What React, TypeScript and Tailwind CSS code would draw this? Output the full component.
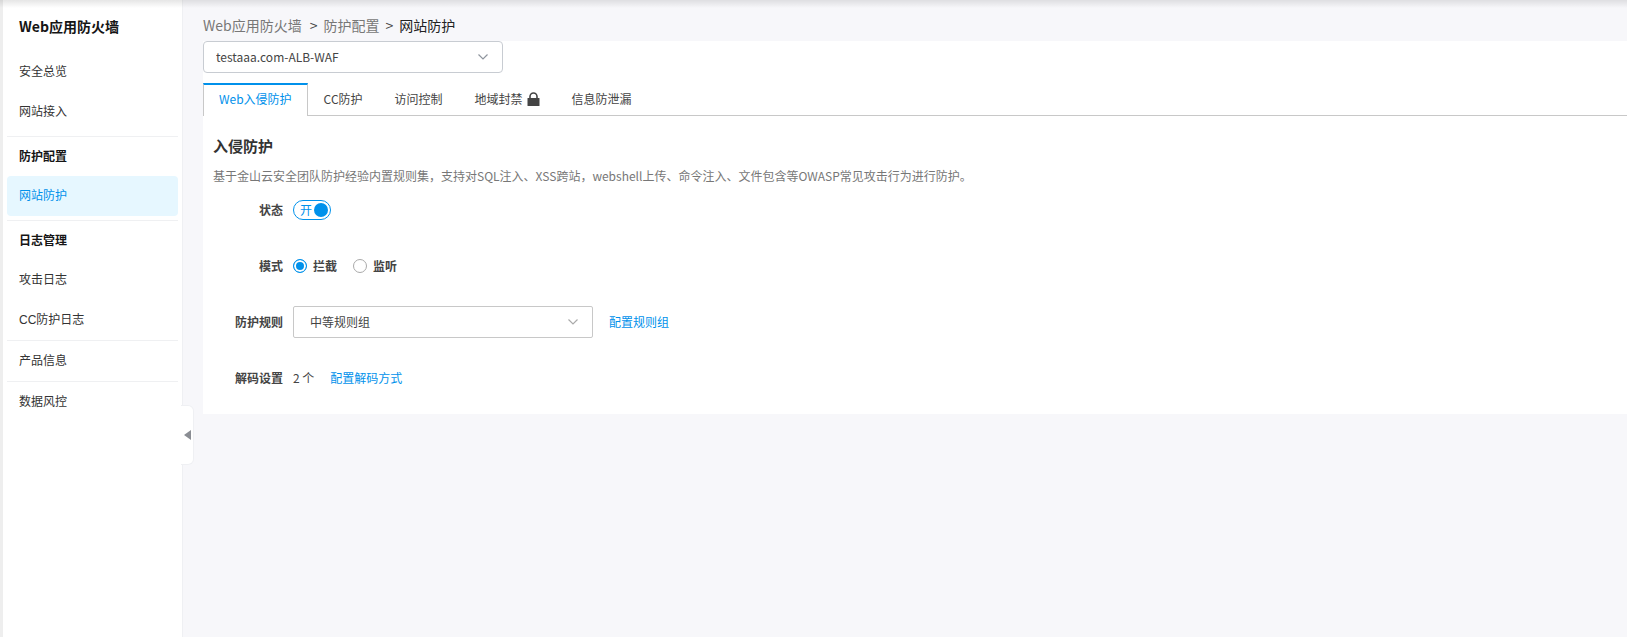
import React, { useState } from "react";
import clsx from "clsx";

const menuGroups = [
  { title: "", items: ["安全总览", "网站接入"], spaced: true },
  { title: "防护配置", items: ["网站防护"], spaced: true },
  { title: "日志管理", items: ["攻击日志", "CC防护日志"], spaced: false },
  { title: "", items: ["产品信息"], spaced: false },
  { title: "", items: ["数据风控"], spaced: false },
];

const tabs = ["Web入侵防护", "CC防护", "访问控制", "地域封禁", "信息防泄漏"];

const LockIcon = () => (
  <svg width="13" height="14" viewBox="0 0 13 14" aria-hidden="true">
    <path
      d="M3 7V4.5a3.5 3.5 0 0 1 7 0V7"
      fill="none"
      stroke="#444"
      strokeWidth="1.6"
    />
    <rect x="0.5" y="6" width="12" height="8" rx="0.5" fill="#444" />
  </svg>
);

const Chevron = ({ className }: { className: string }) => (
  <svg
    width="12"
    height="8"
    viewBox="0 0 12 8"
    fill="none"
    stroke="currentColor"
    strokeWidth="1.2"
    className={clsx("pointer-events-none absolute top-3", className)}
    aria-hidden="true"
  >
    <path d="M1.5 1.5 6 6l4.5-4.5" />
  </svg>
);

const Sidebar = () => {
  const [active, setActive] = useState("网站防护");

  return (
    <aside className="relative w-[183px] shrink-0 border-l-3 border-r border-l-[#eeeeee] border-r-[#eff0f3] bg-white px-1 text-xs text-[#333]">
      <h1 className="flex h-[52px] items-center pl-3 text-sm font-bold text-[#151515]">
        Web应用防火墙
      </h1>
      <nav className="font-['Liberation_Sans','Noto_Sans_CJK_SC',sans-serif]">
        {menuGroups.map((group, index) => (
          <div
            key={index}
            className={clsx(
              index > 0 && "border-t border-[#eff0f2]",
              group.spaced && "pb-1"
            )}
          >
            {group.title && (
              <h2 className="flex h-[39px] items-center pl-3 font-bold text-[#151515]">
                {group.title}
              </h2>
            )}
            {group.items.map((item) => (
              <a
                key={item}
                href="#"
                onClick={() => setActive(item)}
                className={clsx(
                  "flex h-10 items-center rounded pl-3",
                  item === active && "bg-[#e6f7ff] text-[#0091eb]"
                )}
              >
                {item}
              </a>
            ))}
          </div>
        ))}
      </nav>

      {/* Collapse handle */}
      <button
        aria-label="收起"
        className="absolute top-[405px] -right-3 flex h-[60px] w-[13px] items-center justify-center rounded-r-md border border-l-0 border-[#eff0f3] bg-white"
      >
        <svg width="7" height="10" viewBox="0 0 7 10" aria-hidden="true">
          <path d="M7 0v10L0 5z" fill="#8a8d93" />
        </svg>
      </button>
    </aside>
  );
};

const Row = ({
  label,
  htmlFor,
  children,
}: {
  label: string;
  htmlFor?: string;
  children: React.ReactNode;
}) => (
  <div className="flex h-8 items-center">
    <label
      htmlFor={htmlFor}
      className="mr-[10px] w-[70px] text-right font-bold text-[#444]"
    >
      {label}
    </label>
    {children}
  </div>
);

const App = () => {
  const [tab, setTab] = useState("Web入侵防护");
  const [enabled, setEnabled] = useState(true);
  const [mode, setMode] = useState("拦截");

  return (
    <div className="relative flex min-h-screen bg-[#f7f7fa] font-['Noto_Sans_CJK_SC',sans-serif] text-xs text-[#444]">
      {/* Shadow of the top bar */}
      <div className="pointer-events-none absolute inset-x-0 top-0 z-10 h-2 bg-linear-to-b from-black/10 to-transparent" />

      <Sidebar />

      <main className="min-w-0 flex-1 pl-5">
        <nav className="flex h-[41px] items-end gap-[6px] pb-1 text-sm leading-6">
          <a href="#" className="mr-[2px] text-[#777]">
            Web应用防火墙
          </a>
          <span>&gt;</span>
          <a href="#" className="text-[#777]">
            防护配置
          </a>
          <span>&gt;</span>
          <span className="text-[#222]">网站防护</span>
        </nav>

        <div className="bg-white pb-5">
          <div className="relative w-[300px]">
            <select
              aria-label="实例"
              className="h-8 w-full appearance-none rounded border border-[#c8ccd2] bg-white px-3 outline-none"
            >
              <option>testaaa.com-ALB-WAF</option>
            </select>
            <Chevron className="right-[14px] text-[#8f959e]" />
          </div>

          <div role="tablist" className="mt-[10px] flex h-[33px]">
            {tabs.map((name) => (
              <button
                key={name}
                role="tab"
                aria-selected={name === tab}
                onClick={() => setTab(name)}
                className={clsx(
                  "flex items-center gap-1",
                  name === tab
                    ? "border-x border-t-2 border-x-[#c8c8c8] border-t-[#0091eb] px-[15px] pb-[3px] text-[#0091eb]"
                    : "border-b border-[#c8c8c8] px-4"
                )}
              >
                {name}
                {name === "地域封禁" && <LockIcon />}
              </button>
            ))}
            <div className="flex-1 border-b border-[#c8c8c8]" />
          </div>

          <section className="px-[10px] pt-[18px]">
            <h2 className="text-[15px] leading-6 font-bold text-[#333]">
              入侵防护
            </h2>
            <p className="mt-2 leading-5 text-[#777]">
              基于金山云安全团队防护经验内置规则集，支持对SQL注入、XSS跨站，webshell上传、命令注入、文件包含等OWASP常见攻击行为进行防护。
            </p>

            <div className="mt-2 flex flex-col gap-6">
              <Row label="状态">
                <button
                  role="switch"
                  aria-checked={enabled}
                  aria-label="状态"
                  onClick={() => setEnabled(!enabled)}
                  className={clsx(
                    "flex h-5 w-[38px] items-center justify-between rounded-full border pr-[2px] pl-[6px]",
                    enabled
                      ? "border-[#0091eb] text-[#0091eb]"
                      : "flex-row-reverse border-[#aaa] text-[#aaa]"
                  )}
                >
                  {enabled ? "开" : "关"}
                  <span className="size-[14px] rounded-full bg-current" />
                </button>
              </Row>

              <Row label="模式">
                {["拦截", "监听"].map((name) => (
                  <label
                    key={name}
                    className="mr-4 flex items-center gap-[6px] font-bold text-[#444]"
                  >
                    <input
                      type="radio"
                      name="mode"
                      checked={mode === name}
                      onChange={() => setMode(name)}
                      className="size-[14px] appearance-none rounded-full border border-[#aaa] bg-white checked:border-[#0091eb] checked:bg-[#0091eb] checked:inset-ring-2 checked:inset-ring-white"
                    />
                    {name}
                  </label>
                ))}
              </Row>

              <Row label="防护规则" htmlFor="rule">
                <div className="relative w-[300px]">
                  <select
                    id="rule"
                    className="h-8 w-full appearance-none rounded-xs border border-[#c8c8c8] bg-white px-4 outline-none"
                  >
                    <option>中等规则组</option>
                  </select>
                  <Chevron className="right-[14px] text-[#aaa]" />
                </div>
                <a href="#" className="ml-4 text-[#0091eb]">
                  配置规则组
                </a>
              </Row>

              <Row label="解码设置">
                <span>2 个</span>
                <a href="#" className="ml-4 text-[#0091eb]">
                  配置解码方式
                </a>
              </Row>
            </div>
          </section>
        </div>
      </main>
    </div>
  );
};

export default App;
